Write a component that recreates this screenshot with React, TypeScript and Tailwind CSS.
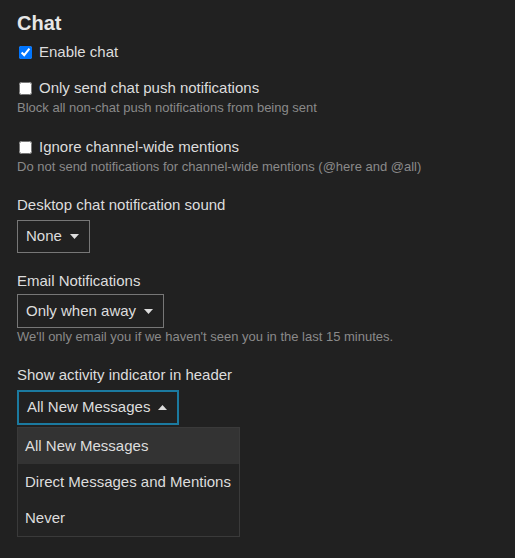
import { useState } from 'react';

const Caret = ({ up = false }: { up?: boolean }) => (
    <svg width="9" height="5" viewBox="0 0 9 5" className="ml-[8px]">
        {up ? <path d="M0 5 L4.5 0 L9 5 Z" fill="#dddddd" /> : <path d="M0 0 L4.5 5 L9 0 Z" fill="#dddddd" />}
    </svg>
);

const CheckRow = ({ label, checked, desc }: { label: string; checked?: boolean; desc?: string }) => (
    <div>
        <label className="flex items-center h-[20px] text-[15px] text-[#dddddd]">
            <input
                type="checkbox"
                defaultChecked={checked}
                className="w-[13px] h-[13px] ml-[2px] mr-[7px] accent-[#0075ff]"
            />
            {label}
        </label>
        {desc && <p className="text-[13px] leading-[19px] text-[#8a8a8a]">{desc}</p>}
    </div>
);

const App = () => {
    const [open] = useState(true);
    const options = ['All New Messages', 'Direct Messages and Mentions', 'Never'];

    return (
        <div className="w-[515px] h-[558px] bg-[#212121] pl-[17px] pt-[11px] font-['Liberation_Sans',Arial,sans-serif] overflow-hidden">
            <h2 className="text-[20px] leading-[24px] font-bold text-[#e6e6e6]">Chat</h2>

            <div className="mt-[7px]">
                <CheckRow label="Enable chat" checked />
            </div>
            <div className="mt-[16px]">
                <CheckRow
                    label="Only send chat push notifications"
                    desc="Block all non-chat push notifications from being sent"
                />
            </div>
            <div className="mt-[20px]">
                <CheckRow
                    label="Ignore channel-wide mentions"
                    desc="Do not send notifications for channel-wide mentions (@here and @all)"
                />
            </div>

            <div className="mt-[19px] text-[15px] leading-[20px] text-[#dddddd]">Desktop chat notification sound</div>
            <button className="mt-[5px] h-[33px] pl-[8px] pr-[10px] flex items-center border border-[#777777] text-[15px] text-[#dddddd]">
                None
                <Caret />
            </button>

            <div className="mt-[18px] text-[15px] leading-[20px] text-[#dddddd]">Email Notifications</div>
            <button className="mt-[3px] h-[34px] pl-[8px] pr-[10px] flex items-center border border-[#777777] text-[15px] text-[#dddddd]">
                Only when away
                <Caret />
            </button>
            <p className="text-[13px] leading-[17px] text-[#8a8a8a]">
                We'll only email you if we haven't seen you in the last 15 minutes.
            </p>

            <div className="mt-[20px] text-[15px] leading-[20px] text-[#dddddd]">Show activity indicator in header</div>
            <div className="mt-[5px] relative">
                <button className="h-[35px] pl-[8px] pr-[10px] flex items-center border-2 border-[#1b7aa0] text-[15px] text-[#dddddd]">
                    All New Messages
                    <Caret up />
                </button>
                {open && (
                    <ul className="mt-[2px] w-[223px] bg-[#232323] border border-[#3a3a3a] text-[15px] text-[#dddddd]">
                        {options.map((opt, i) => (
                            <li
                                key={opt}
                                className={`h-[36px] flex items-center px-[7px] whitespace-nowrap ${i === 0 ? 'bg-[#333333]' : ''}`}
                            >
                                {opt}
                            </li>
                        ))}
                    </ul>
                )}
            </div>
        </div>
    );
};

export default App;
